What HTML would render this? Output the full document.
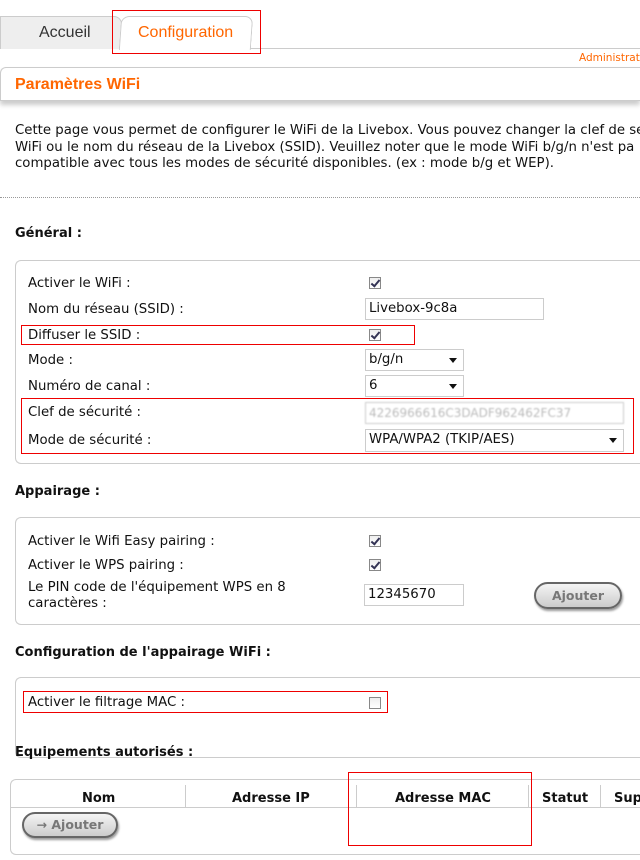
<!DOCTYPE html>
<html><head><meta charset="utf-8"><style>
*{margin:0;padding:0;box-sizing:border-box}
body{width:640px;height:860px;background:#fff;position:relative;overflow:hidden;font-family:"DejaVu Sans","Liberation Sans",sans-serif;font-size:13.3px;color:#111}
.a{position:absolute;white-space:nowrap}
.t{line-height:16px}
.b{font-weight:bold;font-size:13px}
.box{position:absolute;border:1px solid #ccc;border-radius:6px;border-right:none;border-top-right-radius:0;border-bottom-right-radius:0}
.red{position:absolute;border:1px solid #e00}
.cb{position:absolute;width:12px;height:12px;border:1px solid #888;background:linear-gradient(#eee,#fff)}
.cb.k::after{content:"";position:absolute;left:3px;top:0px;width:3px;height:7px;border:solid #335;border-width:0 2px 2px 0;transform:rotate(40deg)}
.inp{position:absolute;border:1px solid #ccc;background:#fff;padding-left:3px;line-height:20px;font-size:13.3px;overflow:hidden}
.sel{position:absolute;border:1px solid #ccc;background:#fff;padding-left:3px;line-height:20px;font-size:13.3px}
.sel::after{content:"";position:absolute;right:6px;top:8px;border:4px solid transparent;border-top:5px solid #111;border-bottom:none}
.btn{position:absolute;border:2px solid #666;border-radius:14px;background:linear-gradient(#f4f4f4,#ccc);box-shadow:1px 2px 2px #999;color:#777;font-weight:bold;text-align:center;font-size:12.5px}
</style></head><body>
<div class="a" style="left:0;top:48px;width:640px;height:1px;background:#ccc"></div>
<div class="a" style="left:0;top:16px;width:122px;height:33px;background:#eee;border:1px solid #ccc;border-bottom:none;border-radius:0 8px 0 0"></div>
<div class="a t" style="left:39px;top:25px;font-family:'Liberation Sans',sans-serif;font-size:16px;color:#333">Accueil</div>
<div class="a" style="left:120px;top:16px;width:132px;height:34px;background:#fff;border:1px solid #ccc;border-bottom:none;border-radius:8px 8px 0 0;transform:skewX(-4deg)"></div>
<div class="a t" style="left:138px;top:25px;font-family:'Liberation Sans',sans-serif;font-size:16px;color:#f60">Configuration</div>
<div class="red" style="left:112px;top:10px;width:149px;height:44px"></div>
<div class="a" style="left:579px;top:52px;font-size:10.5px;color:#f60">Administrat</div>
<div class="a" style="left:0;top:67px;width:640px;height:34px;border:1px solid #ccc;border-right:none;border-radius:6px 0 0 0;box-shadow:0 4px 5px #ccc;background:#fff"></div>
<div class="a" style="left:15px;top:76px;font-weight:bold;font-family:'Liberation Sans',sans-serif;font-size:16px;color:#f60">Paramètres WiFi</div>
<div class="a t" style="left:15px;top:123px;line-height:16.5px">Cette page vous permet de configurer le WiFi de la Livebox. Vous pouvez changer la clef de se<br>WiFi ou le nom du réseau de la Livebox (SSID). Veuillez noter que le mode WiFi b/g/n n'est pa<br>compatible avec tous les modes de sécurité disponibles. (ex : mode b/g et WEP).</div>
<div class="a" style="left:0;top:197px;width:640px;border-top:1px dotted #999"></div>
<div class="a t b" style="left:15px;top:226px">Général :</div>
<div class="box" style="left:15px;top:260px;width:625px;height:204px"></div>
<div class="a t" style="left:28px;top:276px">Activer le WiFi :</div>
<div class="cb k" style="left:369px;top:277px"></div>
<div class="a t" style="left:28px;top:302px">Nom du réseau (SSID) :</div>
<div class="inp" style="left:365px;top:298px;width:179px;height:22px">Livebox-9c8a</div>
<div class="a t" style="left:28px;top:328px">Diffuser le SSID :</div>
<div class="cb k" style="left:369px;top:329px"></div>
<div class="red" style="left:21px;top:325px;width:394px;height:20px"></div>
<div class="a t" style="left:28px;top:353px">Mode :</div>
<div class="sel" style="left:365px;top:349px;width:99px;height:22px">b/g/n</div>
<div class="a t" style="left:28px;top:379px">Numéro de canal :</div>
<div class="sel" style="left:365px;top:375px;width:99px;height:22px">6</div>
<div class="a t" style="left:28px;top:405px">Clef de sécurité :</div>
<div class="inp" style="left:365px;top:402px;width:259px;height:22px;color:#bbb;filter:blur(0.8px);font-size:12px">4226966616C3DADF962462FC37</div>
<div class="a t" style="left:28px;top:433px">Mode de sécurité :</div>
<div class="sel" style="left:365px;top:429px;width:259px;height:23px">WPA/WPA2 (TKIP/AES)</div>
<div class="red" style="left:21px;top:398px;width:613px;height:56px"></div>
<div class="a t b" style="left:15px;top:484px">Appairage :</div>
<div class="box" style="left:15px;top:517px;width:625px;height:108px"></div>
<div class="a t" style="left:28px;top:534px">Activer le Wifi Easy pairing :</div>
<div class="cb k" style="left:369px;top:535px"></div>
<div class="a t" style="left:28px;top:558px">Activer le WPS pairing :</div>
<div class="cb k" style="left:369px;top:559px"></div>
<div class="a t" style="left:28px;top:580px">Le PIN code de l'équipement WPS en 8<br>caractères :</div>
<div class="inp" style="left:364px;top:584px;width:100px;height:22px">12345670</div>
<div class="btn" style="left:534px;top:582px;width:88px;height:27px;line-height:23px">Ajouter</div>
<div class="a t b" style="left:15px;top:645px">Configuration de l'appairage WiFi :</div>
<div class="box" style="left:15px;top:677px;width:625px;height:81px"></div>
<div class="a t" style="left:28px;top:695px">Activer le filtrage MAC :</div>
<div class="cb" style="left:369px;top:697px"></div>
<div class="red" style="left:23px;top:691px;width:365px;height:22px"></div>
<div class="a t b" style="left:15px;top:745px">Equipements autorisés :</div>
<div class="box" style="left:10px;top:779px;width:630px;height:76px"></div>
<div class="a" style="left:11px;top:807px;width:629px;height:1px;background:#ccc"></div>
<div class="a" style="left:185px;top:785px;width:1px;height:22px;background:#ccc"></div>
<div class="a" style="left:356px;top:785px;width:1px;height:22px;background:#ccc"></div>
<div class="a" style="left:528px;top:785px;width:1px;height:22px;background:#ccc"></div>
<div class="a" style="left:600px;top:785px;width:1px;height:22px;background:#ccc"></div>
<div class="a t b" style="left:82px;top:791px">Nom</div>
<div class="a t b" style="left:232px;top:791px">Adresse IP</div>
<div class="a t b" style="left:395px;top:791px">Adresse MAC</div>
<div class="a t b" style="left:542px;top:791px">Statut</div>
<div class="a t b" style="left:614px;top:791px">Sup</div>
<div class="red" style="left:348px;top:772px;width:184px;height:74px"></div>
<div class="btn" style="left:22px;top:812px;width:96px;height:26px;line-height:22px">→ Ajouter</div>
</body></html>
